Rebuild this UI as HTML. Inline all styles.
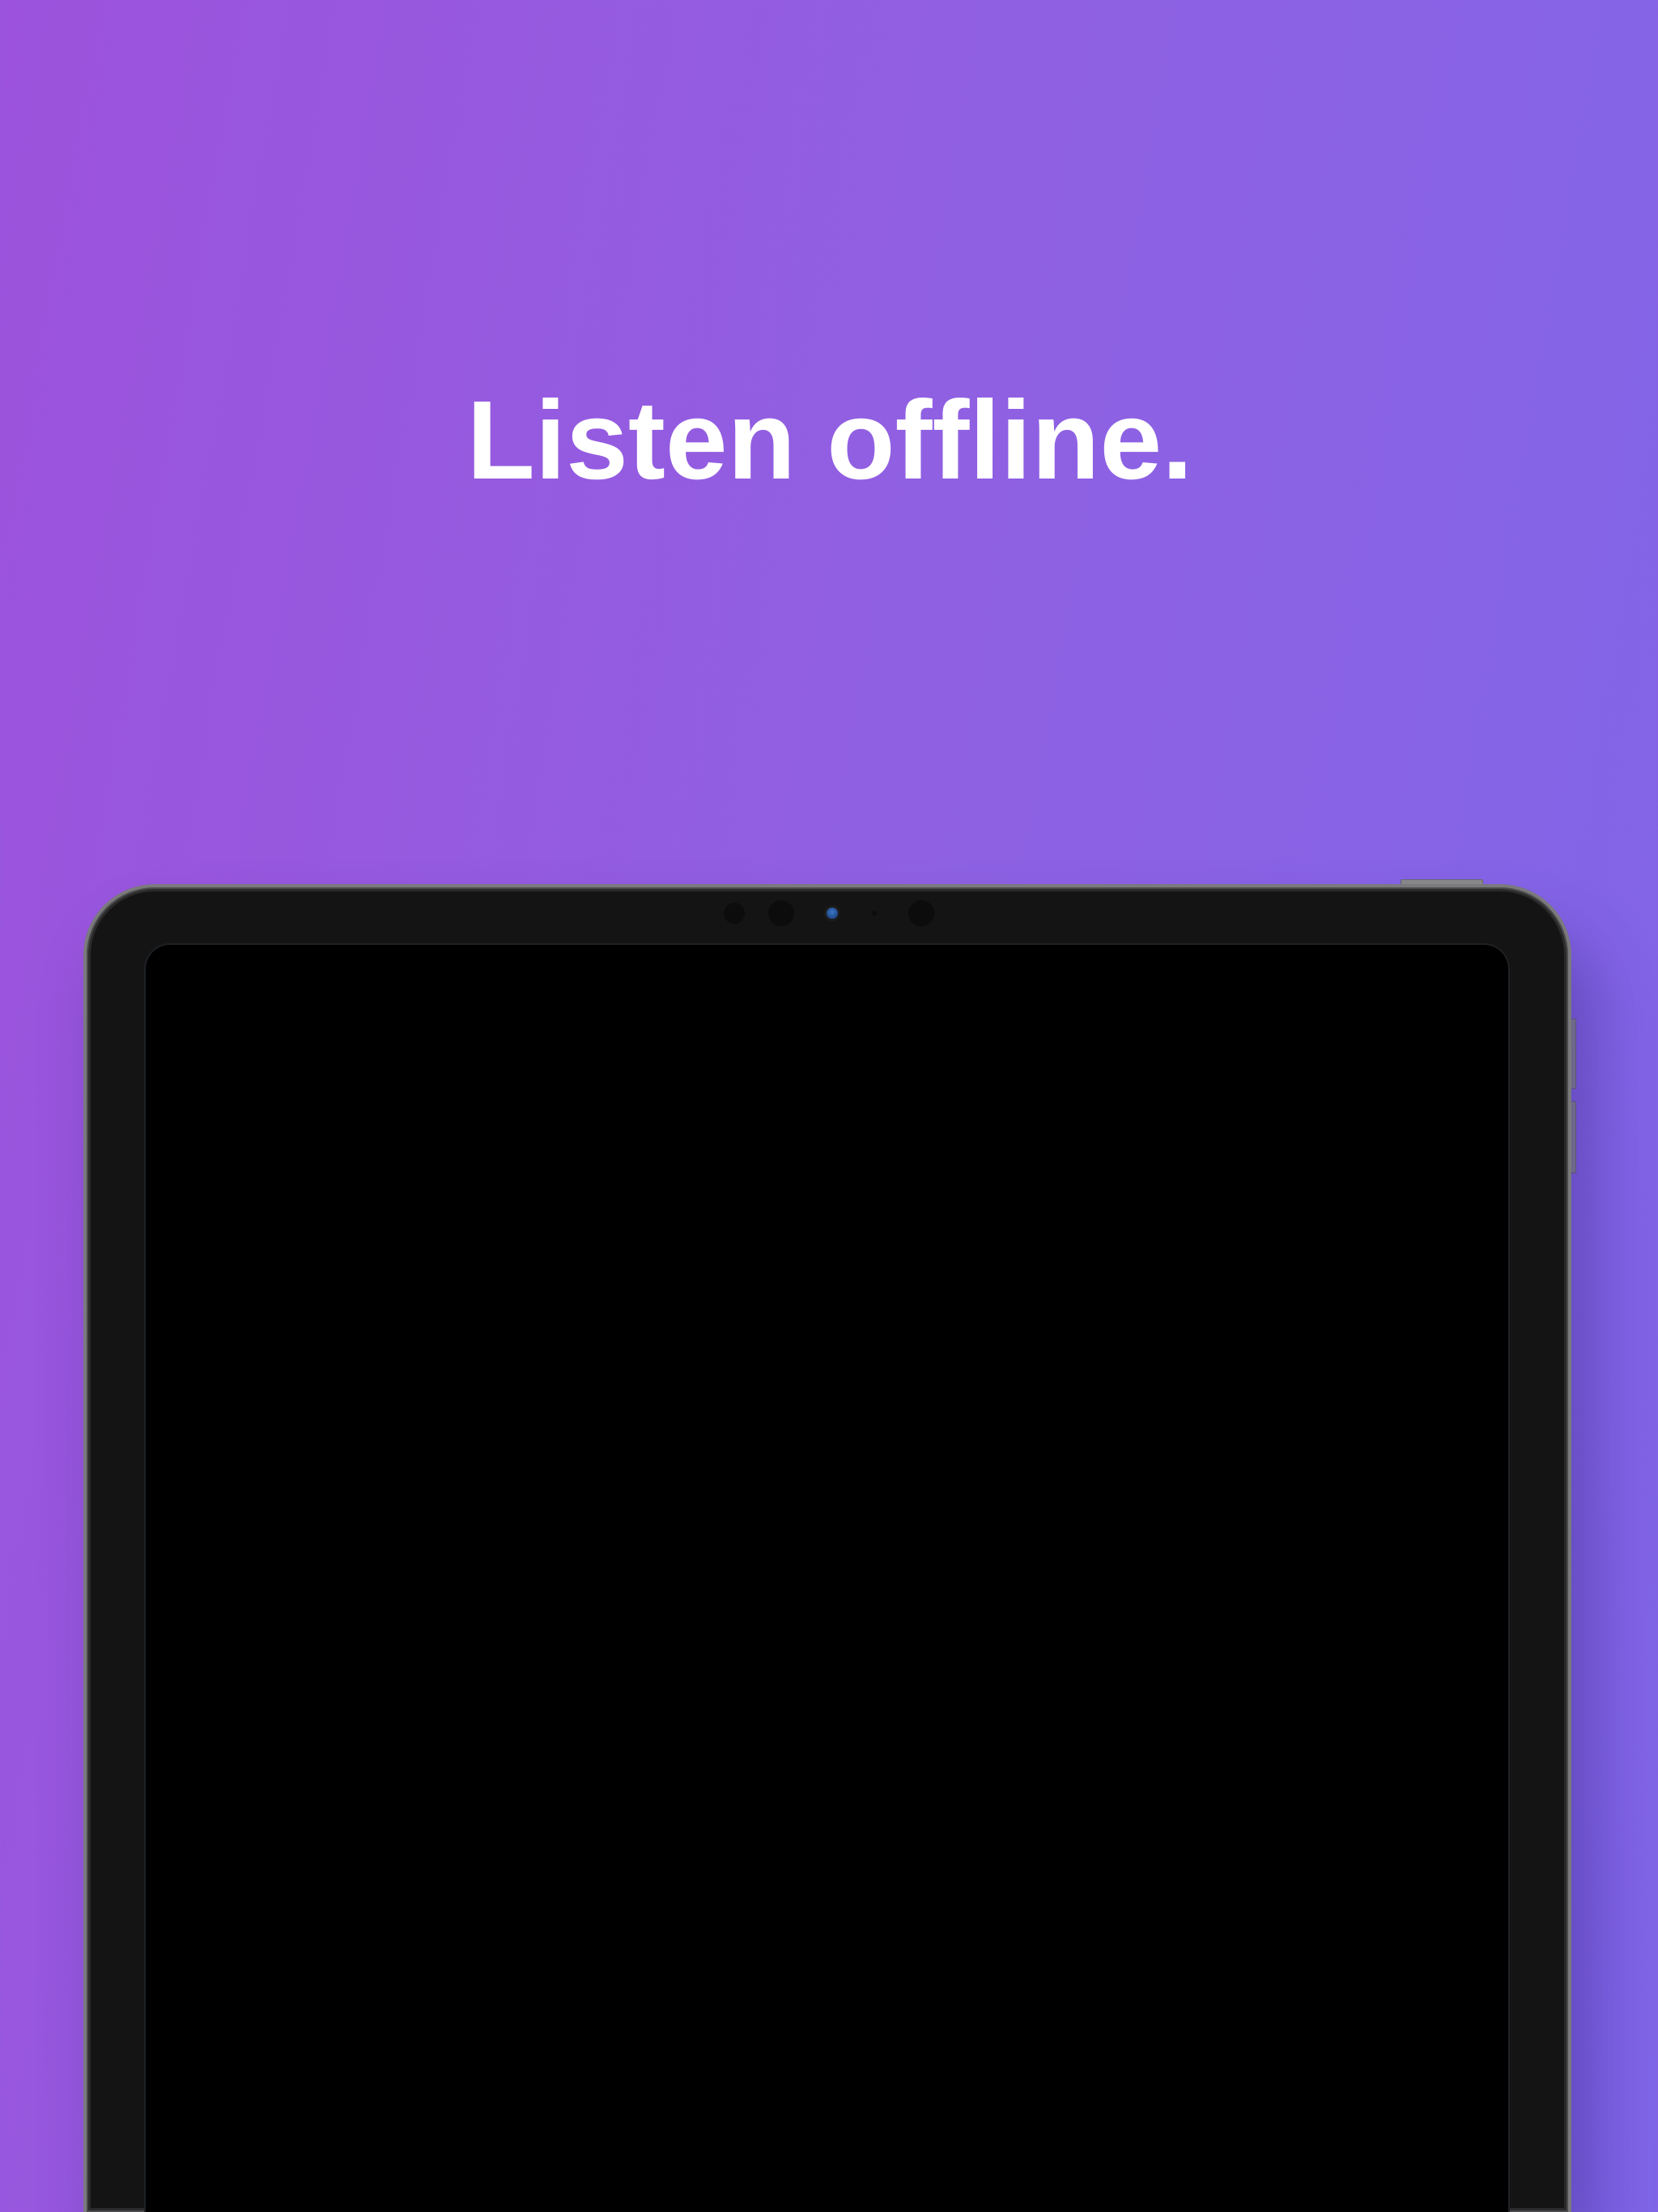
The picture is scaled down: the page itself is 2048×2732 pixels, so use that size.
<!DOCTYPE html>
<html><head><meta charset="utf-8"><style>
html,body{margin:0;padding:0;width:2048px;height:2732px;overflow:hidden}
body{position:relative;
background:linear-gradient(100deg,#9c52dc 0%,#9060e2 50%,#7f66e8 100%);}
h1{position:absolute;left:0;width:2050px;top:462px;margin:0;text-align:center;
font:bold 138px/1.2 "Liberation Sans",sans-serif;color:#fff;letter-spacing:0}
.dev{position:absolute;left:103px;top:1092px;width:1838px;height:1640px;
border-radius:88px 88px 0 0;background:#141414;box-sizing:border-box;
border:4px solid #7a7a7c;border-bottom:0;box-shadow:inset 0 0 0 2px #4a4a4c,inset 0 0 0 5px #2a2a2a,30px 60px 80px rgba(60,40,140,.45)}
.scr{position:absolute;left:180px;top:1167px;width:1683px;height:1565px;background:#000;
border-radius:30px 30px 0 0;box-shadow:0 0 0 2px #1e2124}
.btn{position:absolute;background:#8a8a8c;border:1px solid #6a6a6c}
.c{position:absolute;border-radius:50%;background:#0c0c0c}
</style></head><body>
<h1>Listen offline.</h1>
<div class="btn" style="left:1730px;top:1086px;width:100px;height:5px;border-radius:2px 2px 0 0"></div>
<div class="btn" style="left:1940px;top:1258px;width:5px;height:85px;border-radius:0 2px 2px 0"></div>
<div class="btn" style="left:1940px;top:1360px;width:5px;height:87px;border-radius:0 2px 2px 0"></div>
<div class="dev"></div>
<div class="scr"></div>
<div class="c" style="left:894px;top:1115px;width:26px;height:26px"></div>
<div class="c" style="left:949px;top:1112px;width:32px;height:32px"></div>
<div class="c" style="left:1018px;top:1118px;width:20px;height:20px;background:#1c1c1c"></div>
<div class="c" style="left:1021px;top:1121px;width:14px;height:14px;background:radial-gradient(circle at 50% 40%,#3a78c8,#16336a)"></div>
<div class="c" style="left:1077px;top:1125px;width:6px;height:6px"></div>
<div class="c" style="left:1122px;top:1112px;width:32px;height:32px"></div>
</body></html>
